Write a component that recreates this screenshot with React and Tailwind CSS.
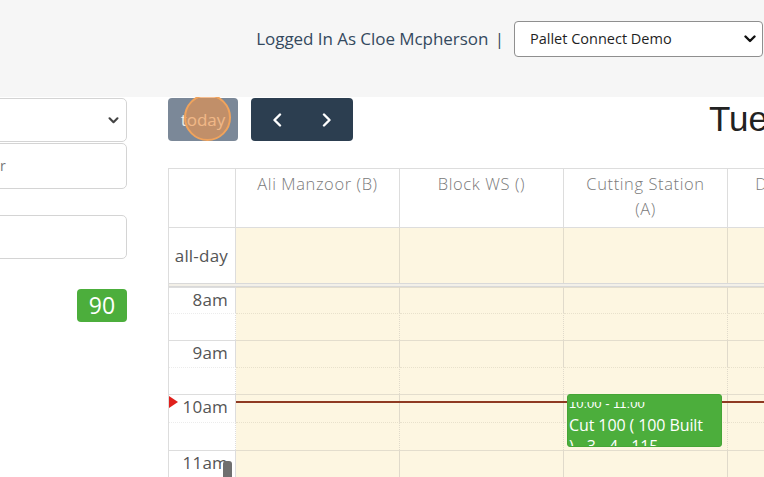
import React from "react";

const Chevron = ({ className }) => (
  <svg viewBox="0 0 12 8" className={className} fill="none" stroke="currentColor" strokeWidth="2.4" strokeLinecap="round" strokeLinejoin="round">
    <path d="M1.5 1.5 L6 6 L10.5 1.5" />
  </svg>
);

const cols = ["Ali Manzoor (B)", "Block WS ()", "Cutting Station (A)", "Delivery WS ()"];

const rows = [
  { h: 26, major: true, label: "8am" },
  { h: 27, major: false },
  { h: 27, major: true, label: "9am" },
  { h: 27, major: false },
  { h: 28, major: true, label: "10am" },
  { h: 28, major: false },
  { h: 28, major: true, label: "11am" },
  { h: 28, major: false },
];

export default function App() {
  return (
    <div className="relative w-[764px] h-[477px] overflow-hidden bg-white" style={{ fontFamily: "'Open Sans', sans-serif" }}>
      {/* Top header */}
      <div className="h-[97px] bg-[#f6f6f6] flex justify-end items-start pt-[21px] pr-[1px]">
        <div className="mt-[5px] mr-[10px] text-[17px] text-[#34495e] whitespace-nowrap tracking-[-0.05px]">
          Logged In As Cloe Mcpherson <span className="ml-[2px]">|</span>
        </div>
        <div className="w-[249px] shrink-0 h-[36px] bg-white border border-[#8f8f8f] rounded-[4px] flex items-center justify-between pl-[15px] pr-[6px] text-[#1f1f1f]">
          <span className="text-[14.5px]">Pallet Connect Demo</span>
          <Chevron className="w-[12px] h-[8px] text-[#111]" />
        </div>
      </div>

      {/* Body */}
      <div className="flex">
        {/* Sidebar */}
        <div className="w-[127px] shrink-0 overflow-hidden flex flex-col items-end">
          <div className="w-[200px] shrink-0 h-[44px] border border-[#d4d4d4] rounded-[5px] flex items-center justify-end pr-[7px] mt-[1px]">
            <Chevron className="w-[11px] h-[7px] text-[#444]" />
          </div>
          <div className="w-[200px] shrink-0 h-[46px] border border-[#d4d4d4] rounded-[5px] mt-[1px] flex items-center">
            <span className="ml-[72px] text-[14px] text-[#777] leading-none">r</span>
          </div>
          <div className="w-[200px] shrink-0 h-[44px] border border-[#d4d4d4] rounded-[5px] mt-[26px]" />
          <div className="w-[50px] h-[33px] mt-[30px] bg-[#4cae3c] rounded-[4px] flex items-center justify-center text-white text-[23px] leading-none">
            90
          </div>
        </div>

        {/* Main */}
        <div className="ml-[41px] flex-1 min-w-0 overflow-hidden">
          {/* Toolbar */}
          <div className="relative flex items-start h-[44px] mt-[1px]">
            <div className="w-[70px] shrink-0 h-[43px] rounded-[4px] bg-[#7b8898] flex items-center justify-center text-[#f3ece4] text-[17px]">
              today
            </div>
            <div className="absolute left-[16px] top-[-4px] w-[47px] h-[47px] rounded-full bg-[#f0954a]/60 border-2 border-[#f0a35c]" />
            <div className="ml-[13px] shrink-0 w-[102px] h-[43px] rounded-[4px] bg-[#2c3e50] flex items-center justify-between px-[21px] text-white">
              <svg viewBox="0 0 10 14" className="w-[10px] h-[14px]" fill="none" stroke="currentColor" strokeWidth="2.4" strokeLinecap="round" strokeLinejoin="round"><path d="M8 1.5 L2.5 7 L8 12.5" /></svg>
              <svg viewBox="0 0 10 14" className="w-[10px] h-[14px]" fill="none" stroke="currentColor" strokeWidth="2.4" strokeLinecap="round" strokeLinejoin="round"><path d="M2 1.5 L7.5 7 L2 12.5" /></svg>
            </div>
            <div className="ml-[356px] shrink-0 mt-[-1px] whitespace-nowrap text-[35px] leading-[44px] text-[#222]" style={{ fontFamily: "'Liberation Sans', Arial, sans-serif" }}>
              Tuesday 14 March 2023
            </div>
          </div>

          {/* Calendar table */}
          <div className="mt-[26px] w-[724px] border-l border-t border-[#dddddd]">
            {/* Header row */}
            <div className="flex h-[58px]">
              <div className="w-[67px] shrink-0 border-r border-[#dddddd]" />
              {cols.map((c) => (
                <div key={c} className="w-[164px] shrink-0 border-r border-[#dddddd] text-center text-[16.5px] tracking-[0.6px] leading-[25px] text-[#7a7a7a] pt-[2px] px-[12px] font-light">
                  {c}
                </div>
              ))}
            </div>
            {/* All-day row */}
            <div className="flex h-[56px] border-t border-[#dddddd]">
              <div className="w-[67px] shrink-0 border-r border-[#dddddd] flex items-center justify-end pr-[7px] text-[17px] text-[#555] tracking-[0.2px]">
                all-day
              </div>
              {cols.map((c) => (
                <div key={c} className="w-[164px] shrink-0 border-r border-[#e2dccb] bg-[#fdf6e1]" />
              ))}
            </div>
            {/* Divider */}
            <div className="h-[4px] border-t border-b border-[#d9d9d9] bg-[#f3f0e8]" />
            {/* Time grid */}
            <div className="relative">
              {rows.map((r, i) => (
                <div key={i} className="flex" style={{ height: r.h }}>
                  <div className={`w-[67px] shrink-0 border-r border-[#dddddd] flex justify-end items-start pr-[7px] pt-[3px] text-[17px] leading-[18px] text-[#555] tracking-[0.2px] ${r.major ? "border-t border-t-[#dddddd]" : "border-t border-dotted border-t-[#ececec]"}`}>
                    {r.label}
                  </div>
                  {cols.map((c) => (
                    <div key={c} className={`w-[164px] shrink-0 border-r border-r-[#e0dacb] bg-[#fdf6e1] ${r.major ? "border-t border-t-[#e3ddcd]" : "border-t border-dotted border-t-[#e8e1cc]"}`} />
                  ))}
                </div>
              ))}

              {/* Now indicator */}
              <div className="absolute left-[67px] right-0 top-[114px] h-[2px] bg-[#8f3a22]" />
              <div className="absolute left-0 top-[109px] w-0 h-0 border-y-[6px] border-y-transparent border-l-[9px] border-l-[#e0201c]" />

              {/* Event */}
              <div className="absolute left-[398px] top-[107px] w-[155px] h-[53px] rounded-[3px] bg-[#4cae3c] border border-[#45a536] overflow-hidden text-white">
                <div className="h-[8px] mt-[7px] ml-[1px] overflow-hidden flex items-end" style={{ fontFamily: "'Liberation Sans', Arial, sans-serif" }}>
                  <div className="text-[13px] leading-[13px] whitespace-nowrap">10:00 - 11:00</div>
                </div>
                <div className="ml-[1px] mt-[5px] text-[16px] leading-[21px] whitespace-nowrap tracking-[-0.1px]">
                  Cut 100 ( 100 Built
                  <br />
                  ) - 3 - 4 - 115
                </div>
              </div>

              {/* cursor fragment */}
              <div className="absolute left-[54px] top-[174px] w-[9px] h-[20px] rounded-t-[3px] bg-[#6f6f6f]" />
            </div>
          </div>
        </div>
      </div>
    </div>
  );
}
